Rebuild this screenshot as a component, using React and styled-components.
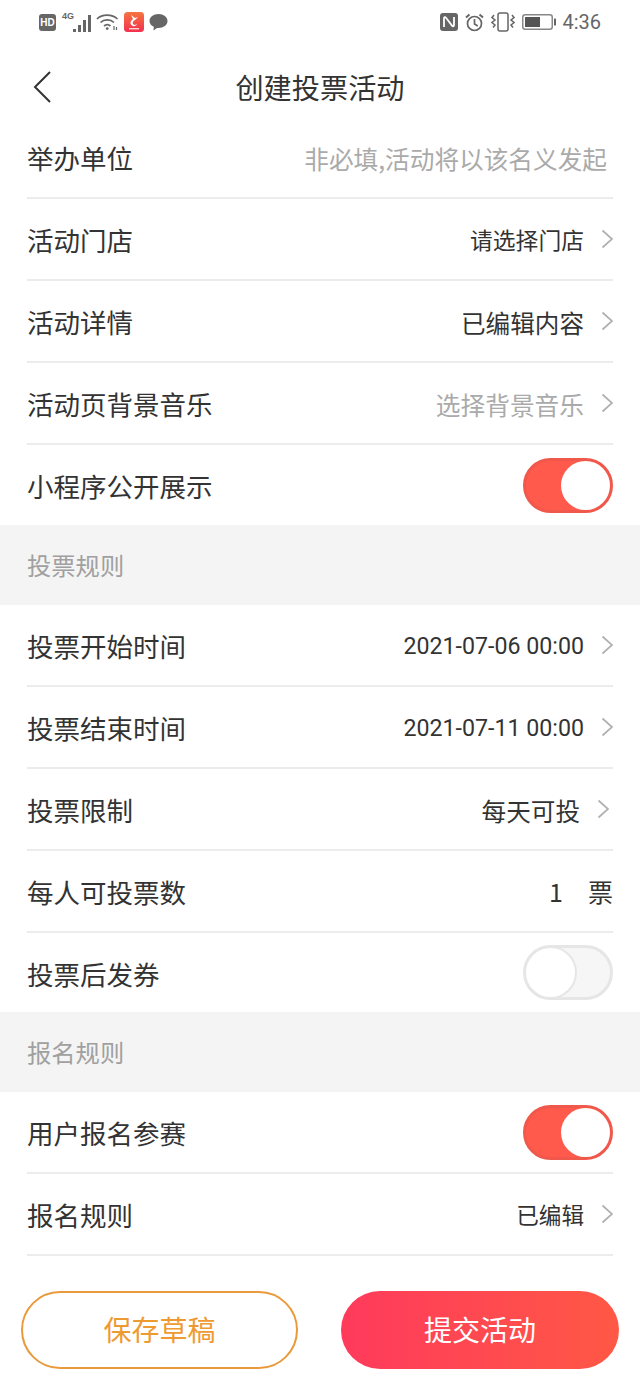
import React from 'react';
import styled, { createGlobalStyle } from 'styled-components';

const GlobalStyle = createGlobalStyle`
  html, body {
    margin: 0;
    padding: 0;
    background: #fff;
  }
  body {
    font-family: "Noto Sans CJK SC", "Noto Sans", sans-serif;
  }
`;

const Page = styled.div`
  width: 640px;
  height: 1387px;
  overflow: hidden;
  background: #fff;
  color: #333;
`;

const StatusBar = styled.div`
  height: 44px;
  padding: 0 39px;
  display: flex;
  align-items: center;
  justify-content: space-between;
  color: #666;
`;

const StatusGroup = styled.div`
  display: flex;
  align-items: center;
  gap: ${(p) => p.$gap || 5}px;
`;

const HdBadge = styled.span`
  width: 17px;
  height: 17px;
  border-radius: 3px;
  background: #666;
  color: #fff;
  font: 700 10px/17px "Liberation Sans", sans-serif;
  text-align: center;
`;

const SignalWrap = styled.div`
  display: flex;
  align-items: flex-end;
  height: 20px;
  margin-left: 1px;
`;

const NetLabel = styled.span`
  font: 700 9px/9px "Liberation Sans", sans-serif;
  align-self: flex-start;
  margin-right: -1px;
`;

const Time = styled.span`
  font: 400 20px/24px "Roboto", sans-serif;
  margin-left: -1px;
`;

const NavBar = styled.div`
  height: 73px;
  position: relative;
  display: flex;
  align-items: center;
  justify-content: center;
  padding-top: 13px;
  box-sizing: border-box;
`;

const BackIcon = styled.svg`
  position: absolute;
  left: 33px;
  top: 27px;
`;

const Title = styled.h1`
  margin: 0;
  font-size: 28.2px;
  font-weight: 400;
  line-height: 40px;
  color: #333;
`;

const Row = styled.div`
  height: ${(p) => p.$height || 82}px;
  box-sizing: border-box;
  margin: 0 27px;
  display: flex;
  align-items: center;
  justify-content: space-between;
  border-bottom: ${(p) => (p.$height ? 'none' : '2px solid #ececec')};
`;

const Label = styled.span`
  font-size: 26.5px;
  line-height: 40px;
  padding-top: 2px;
  color: #333;
`;

const ValueWrap = styled.div`
  display: flex;
  align-items: center;
  gap: 17px;
  margin-right: ${(p) => p.$inset ?? 0}px;
`;

const Value = styled.span`
  font-size: ${(p) => p.$size || 24.6}px;
  line-height: 36px;
  padding-top: 2px;
  color: ${(p) => p.$color || '#333'};
  font-family: ${(p) => (p.$latin ? '"Roboto", "Noto Sans CJK SC", sans-serif' : 'inherit')};
`;

const Placeholder = styled.span`
  font-size: 24.67px;
  line-height: 36px;
  padding-top: 2px;
  color: #aaa;
  margin-right: 6px;
  white-space: nowrap;
`;

const Unit = styled.div`
  display: flex;
  align-items: center;
  gap: 25px;
  font-size: 25px;
  color: #333;
`;

const SectionHead = styled.div`
  height: 80px;
  box-sizing: border-box;
  padding: 0 0 2px 27px;
  display: flex;
  align-items: center;
  background: #f4f4f4;
  color: #a0a0a0;
  font-size: 24.3px;
`;

const Toggle = styled.div`
  width: 90px;
  height: 55px;
  box-sizing: border-box;
  border-radius: 28px;
  border: 3px solid ${(p) => (p.$on ? '#f0584c' : '#e6e6e6')};
  background: ${(p) => (p.$on ? '#ff5a4c' : '#f6f6f6')};
  display: flex;
  justify-content: ${(p) => (p.$on ? 'flex-end' : 'flex-start')};
`;

const Knob = styled.div`
  width: 49px;
  height: 49px;
  border-radius: 50%;
  background: #fff;
  box-shadow: ${(p) => (p.$on ? 'none' : '0 0 0 2px #e6e6e6')};
`;

const Footer = styled.div`
  display: flex;
  justify-content: space-between;
  padding: 35px 21px 0;
`;

const FooterButton = styled.button`
  width: ${(p) => (p.$primary ? 278 : 277)}px;
  height: 78px;
  border-radius: 39px;
  box-sizing: border-box;
  font-family: inherit;
  font-size: 28px;
  padding: 0 0 2px;
  border: ${(p) => (p.$primary ? 'none' : '2px solid #e99a3a')};
  background: ${(p) => (p.$primary ? 'linear-gradient(90deg, #ff3a5c, #ff5845)' : '#fff')};
  color: ${(p) => (p.$primary ? '#fff' : '#ee9a33')};
`;

const Chevron = () => (
  <svg width="12" height="20" viewBox="0 0 12 20" fill="none">
    <path d="M1.5 1.5 L11 10 L1.5 18.5" stroke="#b0b0b0" strokeWidth="1.7" />
  </svg>
);

const Wifi = () => (
  <svg width="23" height="18" viewBox="0 0 23 18" fill="none" stroke="#666" strokeWidth="1.7">
    <path d="M1 6 C6 .8 16 .8 21.5 6" />
    <path d="M4.5 9.5 C8 6 14.5 6 18 9.5" />
    <path d="M8 13 C10 11.3 12.5 11.3 14.5 13" />
    <circle cx="11.2" cy="15.6" r="1.4" fill="#666" stroke="none" />
    <path d="M18 13 L18 17 M20.5 14 L20.5 17" strokeWidth="1.2" />
  </svg>
);

const Signal = () => (
  <svg width="18" height="18" viewBox="0 0 18 18" fill="#666">
    <rect x="0" y="15" width="3" height="3" />
    <rect x="5" y="11" width="3" height="7" />
    <rect x="10" y="6" width="3" height="12" />
    <rect x="15" y="1" width="3" height="17" />
  </svg>
);

const AppIcon = () => (
  <svg width="20" height="20" viewBox="0 0 20 20">
    <defs>
      <linearGradient id="app" x1="0" y1="0" x2="0" y2="1">
        <stop offset="0" stopColor="#f6743f" />
        <stop offset="1" stopColor="#f2304f" />
      </linearGradient>
    </defs>
    <rect width="20" height="20" rx="3.5" fill="url(#app)" />
    <path d="M7 3 L11 6 L14 5 L11 8 C8 9 8 13 11 13 L13 12 C12 15 7 15 6.5 11 C6.3 9 8 8 9 7 Z" fill="#fff" />
    <rect x="5" y="16" width="10" height="1.4" fill="#ffd2d2" />
  </svg>
);

const Bubble = () => (
  <svg width="19" height="18" viewBox="0 0 19 18" fill="#666">
    <path d="M9.5 1 C14.5 1 18.5 4 18.5 8 C18.5 12 14.5 15 9.5 15 L8 15 L4.5 17.5 L4.8 13.8 C2.2 12.6 .5 10.5 .5 8 C.5 4 4.5 1 9.5 1 Z" />
  </svg>
);

const Nfc = () => (
  <svg width="18" height="18" viewBox="0 0 18 18">
    <rect width="18" height="18" rx="3" fill="#666" />
    <path d="M4 14 L4 5.5 C4 4 5.2 3.8 6 4.8 L12 12.6 C12.8 13.6 14 13.4 14 12 L14 4" fill="none" stroke="#fff" strokeWidth="1.8" />
  </svg>
);

const Alarm = () => (
  <svg width="19" height="19" viewBox="0 0 19 19" fill="none" stroke="#666" strokeWidth="1.7">
    <circle cx="9.5" cy="10.5" r="7" />
    <path d="M9.5 6 L9.5 11 L12.8 13" />
    <path d="M1 4.5 L4.5 1.5 M18 4.5 L14.5 1.5" strokeWidth="2" />
  </svg>
);

const Vibrate = () => (
  <svg width="24" height="20" viewBox="0 0 24 20" fill="none" stroke="#666" strokeWidth="1.5">
    <rect x="7" y="1" width="10" height="18" rx="2" />
    <path d="M3 3 L1 5.5 L4 8 L1 10.5 L4 13 L2 15.5" />
    <path d="M21 3 L23 5.5 L20 8 L23 10.5 L20 13 L22 15.5" />
  </svg>
);

const Battery = () => (
  <svg width="34" height="16" viewBox="0 0 34 16">
    <rect x=".75" y=".75" width="29.5" height="14.5" rx="2.5" fill="#fff" stroke="#888" strokeWidth="1.5" />
    <rect x="3" y="3" width="15" height="10" fill="#555" />
    <rect x="32" y="4.5" width="2" height="7" rx=".5" fill="#666" />
  </svg>
);

const SwitchControl = ({ on }) => (
  <Toggle $on={on}>
    <Knob $on={on} />
  </Toggle>
);

export default function App() {
  return (
    <Page>
      <GlobalStyle />
      <StatusBar>
        <StatusGroup>
          <HdBadge>HD</HdBadge>
          <SignalWrap>
            <NetLabel>4G</NetLabel>
            <Signal />
          </SignalWrap>
          <Wifi />
          <AppIcon />
          <Bubble />
        </StatusGroup>
        <StatusGroup $gap={7}>
          <Nfc />
          <Alarm />
          <Vibrate />
          <Battery />
          <Time>4:36</Time>
        </StatusGroup>
      </StatusBar>

      <NavBar>
        <BackIcon width="18" height="32" viewBox="0 0 18 32" fill="none">
          <path d="M17 1 L2 16 L17 31" stroke="#333" strokeWidth="2" />
        </BackIcon>
        <Title>创建投票活动</Title>
      </NavBar>

      <Row>
        <Label>举办单位</Label>
        <Placeholder>非必填,活动将以该名义发起</Placeholder>
      </Row>
      <Row>
        <Label>活动门店</Label>
        <ValueWrap>
          <Value $size={22.8}>请选择门店</Value>
          <Chevron />
        </ValueWrap>
      </Row>
      <Row>
        <Label>活动详情</Label>
        <ValueWrap>
          <Value>已编辑内容</Value>
          <Chevron />
        </ValueWrap>
      </Row>
      <Row>
        <Label>活动页背景音乐</Label>
        <ValueWrap>
          <Value $color="#aaa" $size={24.7}>选择背景音乐</Value>
          <Chevron />
        </ValueWrap>
      </Row>
      <Row $height={80}>
        <Label>小程序公开展示</Label>
        <SwitchControl on />
      </Row>

      <SectionHead>投票规则</SectionHead>

      <Row>
        <Label>投票开始时间</Label>
        <ValueWrap>
          <Value $latin $size={23.2}>2021-07-06 00:00</Value>
          <Chevron />
        </ValueWrap>
      </Row>
      <Row>
        <Label>投票结束时间</Label>
        <ValueWrap>
          <Value $latin $size={23.2}>2021-07-11 00:00</Value>
          <Chevron />
        </ValueWrap>
      </Row>
      <Row>
        <Label>投票限制</Label>
        <ValueWrap $inset={4}>
          <Value>每天可投</Value>
          <Chevron />
        </ValueWrap>
      </Row>
      <Row>
        <Label>每人可投票数</Label>
        <Unit>
          <span>1</span>
          <span>票</span>
        </Unit>
      </Row>
      <Row $height={79}>
        <Label>投票后发券</Label>
        <SwitchControl />
      </Row>

      <SectionHead>报名规则</SectionHead>

      <Row>
        <Label>用户报名参赛</Label>
        <SwitchControl on />
      </Row>
      <Row>
        <Label>报名规则</Label>
        <ValueWrap>
          <Value $size={22.6}>已编辑</Value>
          <Chevron />
        </ValueWrap>
      </Row>

      <Footer>
        <FooterButton>保存草稿</FooterButton>
        <FooterButton $primary>提交活动</FooterButton>
      </Footer>
    </Page>
  );
}
